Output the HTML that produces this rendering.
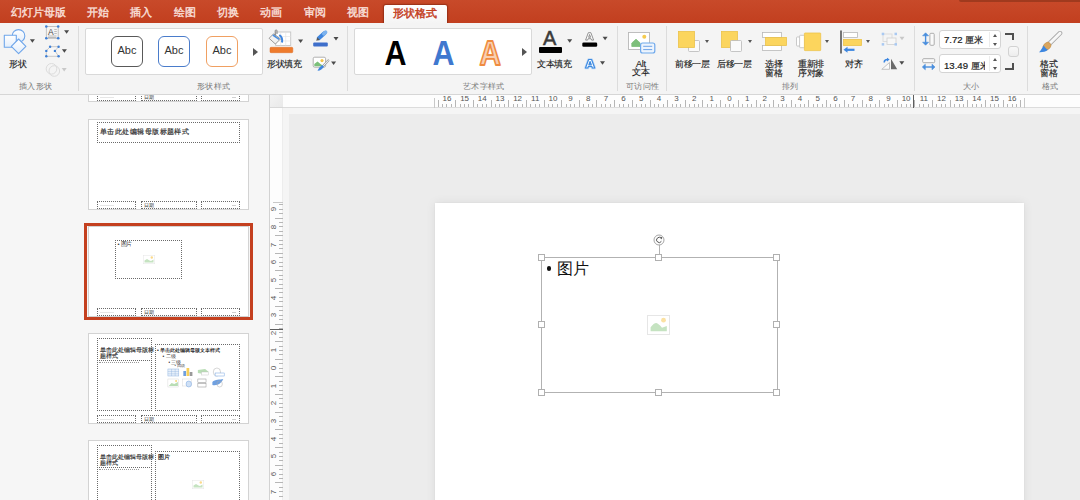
<!DOCTYPE html>
<html><head><meta charset="utf-8">
<style>
*{box-sizing:border-box}
html,body{margin:0;padding:0;width:1080px;height:500px;overflow:hidden;background:#F5F5F5;font-family:"Liberation Sans",sans-serif}
.a{position:absolute}
#tabs{left:0;top:0;width:1080px;height:23px;background:linear-gradient(#C84A2A,#C23F1F)}
.tab{position:absolute;top:6px;font-size:10.6px;line-height:13px;color:#F8DFD7;white-space:nowrap;-webkit-text-stroke:0.4px #F8DFD7}
#ribbon{left:0;top:23px;width:1080px;height:72px;background:#F4F4F4;border-bottom:1px solid #D6D6D6}
.sep{position:absolute;top:3px;width:1px;height:65px;background:#DCDCDC}
.lbl{position:absolute;font-size:9px;line-height:10px;color:#222;white-space:nowrap;letter-spacing:-0.3px;-webkit-text-stroke:0.15px #222}
.glbl{position:absolute;top:58px;font-size:8.4px;letter-spacing:0.3px;line-height:10px;color:#7A7A7A;white-space:nowrap}
.rt{position:absolute;width:1px;background:#B6B6B6}
.rn{position:absolute;top:0px;width:20px;text-align:center;font-size:8px;line-height:8px;color:#555;font-family:"Liberation Sans",sans-serif}
.vn{position:absolute;left:-6px;width:20px;height:20px;text-align:center;font-size:8px;line-height:20px;color:#555;transform:rotate(-90deg)}
.hd{position:absolute;width:7px;height:7px;background:#FFF;border:1px solid #B0B0B0}
.th{position:absolute;width:161px;height:91px;background:#FFF;border:1px solid #D3D3D3;overflow:hidden}
.ph{position:absolute;border:1px dotted #6A6A6A;margin:-1px 0 0 -1px}
.dd{position:absolute;width:0;height:0;border-left:2.5px solid transparent;border-right:2.5px solid transparent;border-top:3.5px solid #555}
</style></head><body>
<div id="tabs" class="a">
  <div class="a" style="left:959px;top:0;width:121px;height:2px;background:#A03A1E;border-radius:0 0 0 3px"></div>
  <span class="tab" style="left:11px">幻灯片母版</span>
  <span class="tab" style="left:87px">开始</span>
  <span class="tab" style="left:130px">插入</span>
  <span class="tab" style="left:174px">绘图</span>
  <span class="tab" style="left:217px">切换</span>
  <span class="tab" style="left:260px">动画</span>
  <span class="tab" style="left:304px">审阅</span>
  <span class="tab" style="left:347px">视图</span>
  <div class="a" style="left:383.5px;top:5px;width:63px;height:19px;background:linear-gradient(#FFFFFF,#F4F4F4);border-radius:2px 2px 0 0;box-shadow:0 0 1.5px 1px rgba(110,30,10,0.55)"></div>
  <span class="tab" style="left:392.5px;top:6.5px;color:#C4401F;-webkit-text-stroke:0.45px #C4401F">形状格式</span>
</div>
<div id="ribbon" class="a">
  <!-- group 1: insert shapes -->
  <svg class="a" style="left:0;top:0" width="78" height="60" viewBox="0 0 78 60">
    <defs><linearGradient id="gb" x1="0" y1="0" x2="0" y2="1"><stop offset="0" stop-color="#FFFFFF"/><stop offset="1" stop-color="#E3EEFB"/></linearGradient></defs>
    <g stroke="#6FA6EA" stroke-width="1.1" stroke-linejoin="round" fill="url(#gb)">
    <circle cx="18.5" cy="12.9" r="6.3"/>
    <rect x="4.3" y="12.3" width="12" height="12"/>
    <path d="M18.6 16 L25.9 23.3 L18.6 30.6 L11.3 23.3 Z"/>
    </g>
    <path d="M29.90 16.25 H34.90 L32.40 19.75 Z" fill="#4A4A4A"/>
    <rect x="46.3" y="3.5" width="11.9" height="11.8" fill="#F4F4F4" stroke="#B5B5B5" stroke-width="0.8"/>
    <text x="48" y="12.3" font-size="8.5" font-family="Liberation Sans" fill="#444">A</text>
    <path d="M54.3 6.5h2.5M54.3 8.5h2.5M54.3 10.5h2.5M48 13h8.5M48 14.5h8.5" stroke="#A5A5A5" stroke-width="0.7"/>
    <g fill="#3D7FD6"><circle cx="46.3" cy="3.5" r="1.3"/><circle cx="58.2" cy="3.5" r="1.3"/><circle cx="46.3" cy="15.3" r="1.3"/><circle cx="58.2" cy="15.3" r="1.3"/></g>
    <path d="M64.10 7.35 H69.10 L66.60 10.85 Z" fill="#4A4A4A"/>
    <path d="M50.1 23.7 H58.6 L54.9 27.9 L58.6 33.3 H46.3 V27.9 Z" fill="#F7F7F7" stroke="#BDBDBD" stroke-width="0.8"/>
    <g fill="#3D7FD6"><circle cx="50.1" cy="23.7" r="1.2"/><circle cx="58.6" cy="23.7" r="1.2"/><circle cx="54.9" cy="27.9" r="1.2"/><circle cx="58.6" cy="33.3" r="1.2"/><circle cx="46.3" cy="33.3" r="1.2"/><circle cx="46.3" cy="27.9" r="1.2"/></g>
    <path d="M61.90 26.15 H66.90 L64.40 29.65 Z" fill="#4A4A4A"/>
    <circle cx="51.5" cy="45.8" r="5.3" fill="none" stroke="#DCDCDC" stroke-width="1"/>
    <circle cx="54.3" cy="48" r="5.3" fill="none" stroke="#DCDCDC" stroke-width="1"/>
    <path d="M61.70 44.95 H66.70 L64.20 48.45 Z" fill="#C9C9C9"/>
  </svg>
  <span class="lbl" style="left:9px;top:36px">形状</span>
  <span class="glbl" style="left:19px">插入形状</span>
  <div class="sep" style="left:78px"></div>

  <!-- group 2: shape styles gallery -->
  <div class="a" style="left:85px;top:5px;width:178px;height:47px;background:#FFF;border:1px solid #D9D9D9;border-radius:2px"></div>
  <div class="a" style="left:111px;top:13px;width:32px;height:31px;border:1.5px solid #595959;border-radius:6px;font-size:11px;line-height:26px;text-align:center;color:#333">Abc</div>
  <div class="a" style="left:158px;top:13px;width:32px;height:31px;border:1.5px solid #4A7CCB;border-radius:6px;font-size:11px;line-height:26px;text-align:center;color:#333">Abc</div>
  <div class="a" style="left:206px;top:13px;width:32px;height:31px;border:1.5px solid #F0A062;border-radius:6px;font-size:11px;line-height:26px;text-align:center;color:#333">Abc</div>
  <div class="a" style="left:253px;top:25px;width:0;height:0;border-top:4px solid transparent;border-bottom:4px solid transparent;border-left:5px solid #555"></div>
  <span class="glbl" style="left:197px">形状样式</span>

  <!-- group 3: fill/outline/effects -->
  <svg class="a" style="left:262px;top:0" width="86" height="60" viewBox="0 0 86 60">
    <rect x="13.7" y="9" width="15" height="13.5" fill="#FFF" stroke="#C4C4C4" stroke-width="0.9"/>
    <path d="M18.7 9v13.5M23.7 9v13.5M13.7 13.5h15M13.7 18h15" stroke="#E2E2E2" stroke-width="0.6"/>
    <path d="M7.1 15.3 L11.6 10.8 L18.5 15.9 L13.4 21 Z" fill="#F2F2F2" stroke="#8E8E8E" stroke-width="0.9" stroke-linejoin="round"/>
    <path d="M10.8 12 L17.2 16.3" stroke="#4A8FE0" stroke-width="1.6"/>
    <path d="M13.2 12.5 V7.8 C13.2 6.6 15 6.6 15 7.8 V11" fill="none" stroke="#777" stroke-width="0.9"/>
    <path d="M17.3 12 Q21 14.5 20 19.5" fill="none" stroke="#3F86DF" stroke-width="2"/>
    <rect x="8" y="24.3" width="22.8" height="5.4" rx="1" fill="#EE7B2C" stroke="#DC6A20" stroke-width="0.5"/>
    <path d="M36.10 16.45 H41.10 L38.60 19.95 Z" fill="#4A4A4A"/>
    <path d="M56.8 15.2 L62.6 10.1" stroke="#3F86DF" stroke-width="4" stroke-linecap="round"/>
    <path d="M61.8 10.8 L63.6 9.2" stroke="#7DB3EE" stroke-width="3.6" stroke-linecap="round"/>
    <path d="M54.2 17.8 L55.3 14.3 L57.8 16.9 Z" fill="#5A5A5A"/>
    <rect x="51.2" y="19.4" width="14.6" height="4.2" rx="1" fill="#3E6FCB"/>
    <path d="M71.50 14.05 H76.50 L74.00 17.55 Z" fill="#4A4A4A"/>
    <rect x="51.2" y="34.2" width="12.4" height="10" rx="1.5" fill="#FFF" stroke="#A8A8A8" stroke-width="0.9"/>
    <path d="M52.3 43.3 V41 L55.5 38.6 L58.5 41 L60 42 V43.3 Z" fill="#7CC07A"/>
    <circle cx="60" cy="37.6" r="1.6" fill="#F3C54A"/>
    <path d="M61.5 42.5 L66.3 37.5" stroke="#A0A0A0" stroke-width="2.2" stroke-linecap="round"/>
    <path d="M61.5 42.5 L66.3 37.5" stroke="#F5F5F5" stroke-width="1" stroke-linecap="round"/>
    <path d="M55.5 47.8 C56.5 45.5 58 43.5 60.3 42 L62 43.7 C60.5 46 58.5 47.5 55.5 47.8Z" fill="#3F86DF"/>
    <path d="M69.10 38.45 H74.10 L71.60 41.95 Z" fill="#4A4A4A"/>
  </svg>
  <span class="lbl" style="left:267px;top:36px">形状填充</span>
  <div class="sep" style="left:347px"></div>

  <!-- group 4: wordart -->
  <div class="a" style="left:354px;top:5px;width:178px;height:47px;background:#FFF;border:1px solid #D9D9D9;border-radius:2px"></div>
  <svg class="a" style="left:380px;top:14px" width="130" height="30" viewBox="0 0 130 30">
    <g transform="translate(4.5,28) scale(0.86,1)"><text x="0" y="0" font-size="35.5" font-weight="bold" font-family="Liberation Sans" fill="#000">A</text></g>
    <g transform="translate(52.5,28) scale(0.86,1)"><text x="0" y="0" font-size="35.5" font-weight="bold" font-family="Liberation Sans" fill="#3F78CF">A</text></g>
    <g transform="translate(99.5,28) scale(0.86,1)"><text x="0" y="0" font-size="34.5" font-weight="bold" font-family="Liberation Sans" fill="#F8D0B2" stroke="#EF8B40" stroke-width="1.8" stroke-linejoin="round">A</text></g>
  </svg>
  <div class="a" style="left:522px;top:25px;width:0;height:0;border-top:4px solid transparent;border-bottom:4px solid transparent;border-left:5px solid #555"></div>
  <span class="glbl" style="left:463px">艺术字样式</span>

  <!-- group 5: text fill -->
  <span class="a" style="left:543px;top:5px;font-size:20px;line-height:20px;color:#3A3A3A;-webkit-text-stroke:0.5px #3A3A3A">A</span>
  <div class="a" style="left:539px;top:24px;width:23px;height:6px;background:#000;border-radius:1px"></div>
  <span class="lbl" style="left:537px;top:36px">文本填充</span>
  <svg class="a" style="left:530px;top:0" width="87" height="60" viewBox="0 0 87 60">
    <path d="M37.20 16.25 H42.20 L39.70 19.75 Z" fill="#4A4A4A"/>
    <path d="M55.60 17.10 L58.32 9.70 L60.88 9.70 L63.60 17.10 L61.60 17.10 L61.08 15.69 L58.12 15.69 L57.60 17.10 Z M58.60 14.29 L60.60 14.29 L59.60 11.48 Z" fill="#FFF" stroke="#7A7A7A" stroke-width="0.8" stroke-linejoin="round" fill-rule="evenodd"/>
    <rect x="52.3" y="19.5" width="14.9" height="4.2" rx="1.3" fill="#000"/>
    <path d="M72.60 13.75 H77.60 L75.10 17.25 Z" fill="#4A4A4A"/>
    <path d="M55.50 45.00 L58.63 36.50 L61.57 36.50 L64.70 45.00 L62.40 45.00 L61.80 43.38 L58.40 43.38 L57.80 45.00 Z M58.95 41.77 L61.25 41.77 L60.10 38.54 Z" fill="#FFF" stroke="#BFD9F6" stroke-width="2.6" stroke-linejoin="round" fill-rule="evenodd"/>
    <path d="M55.50 45.00 L58.63 36.50 L61.57 36.50 L64.70 45.00 L62.40 45.00 L61.80 43.38 L58.40 43.38 L57.80 45.00 Z M58.95 41.77 L61.25 41.77 L60.10 38.54 Z" fill="#FFF" stroke="#3F8BE0" stroke-width="1.2" stroke-linejoin="round" fill-rule="evenodd"/>
    <path d="M70.00 38.25 H75.00 L72.50 41.75 Z" fill="#4A4A4A"/>
  </svg>
  <div class="sep" style="left:617px"></div>

  <!-- group 6: alt text -->
  <svg class="a" style="left:627px;top:8px" width="30" height="23" viewBox="0 0 30 23">
    <rect x="1.5" y="1.5" width="21" height="17" fill="#FFF" stroke="#B8B8B8" stroke-width="0.9"/>
    <path d="M4.8 15.5 V12 L9 8.2 L13 11.8 V15.5 Z" fill="#7DBF7A" stroke="#7DBF7A" stroke-width="0.8" stroke-linejoin="round"/>
    <circle cx="17.3" cy="5.7" r="2" fill="#F5CB4E"/>
    <rect x="13.6" y="12" width="14.2" height="10" rx="2" fill="#EDF4FD" stroke="#6FA9EC" stroke-width="1.2"/>
    <path d="M16.2 15.3h9M16.2 18.6h9" stroke="#6FA4E6" stroke-width="1"/>
  </svg>
  <span class="lbl" style="left:636px;top:36px">Alt</span>
  <span class="lbl" style="left:632px;top:44px">文本</span>
  <span class="glbl" style="left:626px">可访问性</span>
  <div class="sep" style="left:666px"></div>

  <!-- group 7: arrange -->
  <svg class="a" style="left:677px;top:7px" width="24" height="23" viewBox="0 0 24 23">
    <rect x="11.5" y="10.5" width="11" height="11" rx="1" fill="#FAFAFA" stroke="#B8B8B8" stroke-width="0.8"/>
    <rect x="1.5" y="1.5" width="16" height="16" fill="#FBD55E" stroke="#EBC24A" stroke-width="0.8"/>
  </svg>
  <div class="dd" style="left:705px;top:17px"></div>
  <span class="lbl" style="left:675px;top:36px">前移一层</span>
  <svg class="a" style="left:720px;top:7px" width="24" height="23" viewBox="0 0 24 23">
    <rect x="1.5" y="1.5" width="16" height="16" fill="#FBD55E" stroke="#EBC24A" stroke-width="0.8"/>
    <rect x="10.5" y="10.5" width="11" height="11" rx="1" fill="#FAFAFA" stroke="#B8B8B8" stroke-width="0.8"/>
  </svg>
  <div class="dd" style="left:748px;top:17px"></div>
  <span class="lbl" style="left:717px;top:36px">后移一层</span>
  <svg class="a" style="left:761px;top:8px" width="27" height="21" viewBox="0 0 27 21">
    <rect x="1.5" y="1.5" width="19" height="5" fill="#FFF" stroke="#B8B8B8" stroke-width="0.8"/>
    <rect x="1.5" y="14.5" width="19" height="5" fill="#FFF" stroke="#B8B8B8" stroke-width="0.8"/>
    <rect x="4.5" y="6.5" width="21" height="8" fill="#FBD55E" stroke="#EBC24A" stroke-width="0.8"/>
  </svg>
  <span class="lbl" style="left:765px;top:36px">选择</span>
  <span class="lbl" style="left:765px;top:45px">窗格</span>
  <svg class="a" style="left:794px;top:8px" width="28" height="21" viewBox="0 0 28 21">
    <rect x="2.5" y="6" width="4" height="9" rx="0.8" fill="#FFF" stroke="#BDBDBD" stroke-width="0.8"/>
    <rect x="5.6" y="4.3" width="5" height="12.4" rx="0.8" fill="#FFF" stroke="#BDBDBD" stroke-width="0.8"/>
    <rect x="10.4" y="2" width="16.3" height="17.6" rx="0.6" fill="#FCD55D" stroke="#EDC44C" stroke-width="0.8"/>
  </svg>
  <div class="dd" style="left:825px;top:17px"></div>
  <span class="lbl" style="left:798px;top:36px">重新排</span>
  <span class="lbl" style="left:798px;top:45px">序对象</span>
  <svg class="a" style="left:839px;top:7px" width="24" height="25" viewBox="0 0 24 25">
    <path d="M2 0.5 V23.5" stroke="#555" stroke-width="1.6"/>
    <rect x="4.5" y="2.5" width="14" height="5" fill="#FFF" stroke="#B8B8B8" stroke-width="0.8"/>
    <rect x="4.5" y="9.5" width="18" height="6" fill="#FBD55E" stroke="#EBC24A" stroke-width="0.8"/>
    <path d="M15.5 19.8 H7" stroke="#3C86E0" stroke-width="2.2"/>
    <path d="M4.5 19.8 L8.5 16.8 V22.8 Z" fill="#3C86E0"/>
  </svg>
  <div class="dd" style="left:866px;top:16.5px"></div>
  <span class="lbl" style="left:845px;top:36px">对齐</span>
  <svg class="a" style="left:876px;top:0" width="34" height="60" viewBox="0 0 34 60">
    <rect x="7" y="11.0" width="9" height="7.5" fill="none" stroke="#D8D8D8" stroke-width="0.8"/>
    <rect x="11" y="15.0" width="9" height="6.5" fill="#F7F7F7" stroke="#D0D0D0" stroke-width="0.8"/>
    <g fill="#A9C9F2"><rect x="5.7" y="9.7" width="2.5" height="2.5"/><rect x="18.5" y="9.7" width="2.5" height="2.5"/><rect x="5.7" y="20.1" width="2.5" height="2.5"/><rect x="18.5" y="20.1" width="2.5" height="2.5"/></g>
    <path d="M23.50 13.75 H28.50 L26.00 17.25 Z" fill="#C8C8C8"/>
    <path d="M5.8 46.3 L13.5 39.5 V46.3 Z" fill="#FAFAFA" stroke="#B5B5B5" stroke-width="0.8" stroke-linejoin="round"/>
    <path d="M15 35.7 V46.3 H21.2 Z" fill="#6A6A6A"/>
    <path d="M8.2 39.5 C8.2 37.5 9.5 36.6 11.5 36.6" fill="none" stroke="#3C86E0" stroke-width="1.5"/>
    <path d="M11 34.8 L13.6 36.6 L11 38.5 Z" fill="#3C86E0"/>
    <path d="M23.30 38.25 H28.30 L25.80 41.75 Z" fill="#4A4A4A"/>
  </svg>
  <span class="glbl" style="left:782px">排列</span>
  <div class="sep" style="left:914px"></div>

  <!-- group 8: size -->
  <svg class="a" style="left:921px;top:9px" width="14" height="14" viewBox="0 0 14 14">
    <path d="M4.6 3 V11" stroke="#4A8FDD" stroke-width="1.4"/>
    <path d="M4.6 0.8 L7.6 3.8 H1.6Z M4.6 13.2 L7.6 10.2 H1.6Z" fill="#4A8FDD" stroke="#4A8FDD" stroke-width="0.6" stroke-linejoin="round"/>
    <rect x="8.9" y="1.3" width="4.3" height="12" rx="1" fill="#FAFAFA" stroke="#A5A5A5" stroke-width="0.9"/>
  </svg>
  <div class="a" style="left:939px;top:7px;width:62px;height:19px;background:#FFF;border:1px solid #D4D4D4;border-radius:3px"></div>
  <span class="a" style="left:944px;top:11px;font-size:9.6px;line-height:12px;color:#222;white-space:nowrap;-webkit-text-stroke:0.2px #222">7.72 <span style="font-size:8.8px">厘米</span></span>
  <div class="a" style="left:989px;top:9px;width:1px;height:15px;background:#ECECEC"></div>
  <div class="a" style="left:993px;top:11px;width:0;height:0;border-left:2.5px solid transparent;border-right:2.5px solid transparent;border-bottom:3px solid #555"></div>
  <div class="a" style="left:993px;top:20px;width:0;height:0;border-left:2.5px solid transparent;border-right:2.5px solid transparent;border-top:3px solid #555"></div>
  <svg class="a" style="left:921px;top:34px" width="15" height="14" viewBox="0 0 15 14">
    <rect x="1.7" y="1.7" width="12" height="4" rx="1" fill="#FAFAFA" stroke="#A5A5A5" stroke-width="0.9"/>
    <path d="M3.5 10 H11.8" stroke="#4A8FDD" stroke-width="1.4"/>
    <path d="M1.3 10 L4.3 7.2 V12.8Z M14 10 L11 7.2 V12.8Z" fill="#4A8FDD" stroke="#4A8FDD" stroke-width="0.6" stroke-linejoin="round"/>
  </svg>
  <div class="a" style="left:939px;top:31px;width:62px;height:19px;background:#FFF;border:1px solid #D4D4D4;border-radius:3px;overflow:hidden"></div>
  <div class="a" style="left:944px;top:35px;width:41px;height:12px;overflow:hidden;line-height:12px"><span style="font-size:9.6px;line-height:12px;color:#222;white-space:nowrap;-webkit-text-stroke:0.2px #222">13.49 <span style="font-size:8.8px">厘米</span></span></div>
  <div class="a" style="left:989px;top:33px;width:1px;height:15px;background:#ECECEC"></div>
  <div class="a" style="left:993px;top:35px;width:0;height:0;border-left:2.5px solid transparent;border-right:2.5px solid transparent;border-bottom:3px solid #555"></div>
  <div class="a" style="left:993px;top:44px;width:0;height:0;border-left:2.5px solid transparent;border-right:2.5px solid transparent;border-top:3px solid #555"></div>
  <div class="a" style="left:1005px;top:10px;width:9px;height:7px;border-top:2px solid #505050;border-right:2px solid #505050"></div>
  <div class="a" style="left:1005px;top:40px;width:9px;height:7px;border-bottom:2px solid #505050;border-right:2px solid #505050"></div>
  <div class="a" style="left:1007.5px;top:23px;width:11px;height:11px;background:linear-gradient(#F8F8F8,#EDEDED);border:1px solid #D2D2D2;border-radius:3px"></div>
  <span class="glbl" style="left:963px">大小</span>
  <div class="sep" style="left:1027px"></div>

  <!-- group 9: format pane -->
  <svg class="a" style="left:1037px;top:8px" width="26" height="23" viewBox="0 0 26 23">
    <path d="M11 14 L23 2.2" stroke="#A8A8A8" stroke-width="4.6" stroke-linecap="round"/>
    <path d="M11 14 L23 2.2" stroke="#F7F7F7" stroke-width="3" stroke-linecap="round"/>
    <ellipse cx="10" cy="15.2" rx="4.3" ry="3.4" transform="rotate(-45 10 15.2)" fill="#D9A55E" stroke="#C08A45" stroke-width="0.5"/>
    <path d="M6.6 14.5 C8 16.5 9 17.8 11 18.8 C8.5 21 5.5 21.3 2 21.2 C3.8 20 5 17 6.6 14.5Z" fill="#3C86E0"/>
  </svg>
  <span class="lbl" style="left:1040px;top:36px">格式</span>
  <span class="lbl" style="left:1040px;top:45px">窗格</span>
  <span class="glbl" style="left:1042px">格式</span>
</div>

<!-- left panel -->
<div class="a" id="panel" style="left:0;top:95px;width:269px;height:405px;background:#F6F6F6;overflow:hidden">
<!-- thumbnails -->
<div class="th" style="left:88px;top:-84px"><div class="ph" style="left:9px;top:82px;width:39px;height:8px"><div class="a" style="left:2px;top:3px;width:14px;height:1px;background:#E6E6E6"></div></div><div class="ph" style="left:53px;top:82px;width:56px;height:8px"><span class="a" style="left:2px;top:0px;font-size:5px;line-height:6px;color:#333">日期</span></div><div class="ph" style="left:113px;top:82px;width:39px;height:8px"><div class="a" style="left:30px;top:3px;width:4px;height:1px;background:#D0D0D0"></div></div></div>
<div class="th" style="left:88px;top:24px"><div class="ph" style="left:9px;top:3px;width:143px;height:21px"><span class="a" style="left:2px;top:4px;font-size:7px;letter-spacing:0.45px;line-height:10px;color:#333;white-space:nowrap;-webkit-text-stroke:0.2px #333">单击此处编辑母版标题样式</span></div><div class="ph" style="left:9px;top:82px;width:39px;height:8px"><div class="a" style="left:2px;top:3px;width:14px;height:1px;background:#E6E6E6"></div></div><div class="ph" style="left:53px;top:82px;width:56px;height:8px"><span class="a" style="left:2px;top:0px;font-size:5px;line-height:6px;color:#333">日期</span></div><div class="ph" style="left:113px;top:82px;width:39px;height:8px"><div class="a" style="left:30px;top:3px;width:4px;height:1px;background:#D0D0D0"></div></div></div>
<div class="a" style="left:84px;top:128px;width:169px;height:97px;border:3px solid #C4401F"></div><div class="th" style="left:88px;top:131px"><div class="ph" style="left:27px;top:14px;width:67px;height:39px"><span class="a" style="left:1.5px;top:-0.5px;font-size:5.8px;line-height:7px;color:#333;white-space:nowrap;letter-spacing:-0.3px">• 图片</span><svg class="a" style="left:27px;top:14px" width="12" height="9" viewBox="0 0 12 9"><rect x="0.25" y="0.25" width="11.5" height="8.5" fill="#FFF" stroke="#E5E5E5" stroke-width="0.5"/><path d="M1.5 7.5 V5.5 L4 4 L6.5 5.5 L8 6 L10.5 4.5 V7.5Z" fill="#C5E3C1"/><circle cx="8.8" cy="2.5" r="1.2" fill="#FBD98A"/></svg></div><div class="ph" style="left:9px;top:82px;width:39px;height:8px"><div class="a" style="left:2px;top:3px;width:14px;height:1px;background:#E6E6E6"></div></div><div class="ph" style="left:53px;top:82px;width:56px;height:8px"><span class="a" style="left:2px;top:0px;font-size:5px;line-height:6px;color:#333">日期</span></div><div class="ph" style="left:113px;top:82px;width:39px;height:8px"><div class="a" style="left:30px;top:3px;width:4px;height:1px;background:#D0D0D0"></div></div></div>
<div class="th" style="left:88px;top:238px"><div class="ph" style="left:9px;top:5px;width:55px;height:23px"><span class="a" style="left:2px;top:8px;width:55px;font-size:5.5px;line-height:6px;color:#333;word-break:break-all;-webkit-text-stroke:0.15px #333">单击此处编辑母版标题样式</span></div><div class="ph" style="left:9px;top:27px;width:55px;height:51px"><div class="a" style="left:1px;top:1px;width:40px;height:2px;border-top:1px dotted #999"></div></div><div class="ph" style="left:67px;top:11px;width:85px;height:67px"><span class="a" style="left:1px;top:1.5px;font-size:5px;line-height:6px;color:#222;white-space:nowrap;-webkit-text-stroke:0.15px #222">• 单击此处编辑母版文本样式</span><span class="a" style="left:6.5px;top:8.5px;font-size:5px;line-height:5px;color:#333;white-space:nowrap">• 二级</span><span class="a" style="left:12.5px;top:14.5px;font-size:4.5px;line-height:5px;color:#333;white-space:nowrap">• 三级</span><span class="a" style="left:18.5px;top:19px;font-size:4px;line-height:4px;color:#555;white-space:nowrap">• 四级</span><svg class="a" style="left:10.5px;top:22px" width="59" height="22" viewBox="0 0 65 22" preserveAspectRatio="none"><rect x="1" y="2" width="12" height="7" fill="#E8F0FA" stroke="#8FB3E0" stroke-width="0.5"/><path d="M1 4.5h12M1 6.8h12M5 2v7M9 2v7" stroke="#8FB3E0" stroke-width="0.4"/><rect x="18" y="4" width="3" height="5" fill="#6FA0E0"/><rect x="21.5" y="1" width="3" height="8" fill="#F6CF5A"/><rect x="25" y="5" width="3" height="4" fill="#9A9A9A"/><path d="M34 3 L42 2 L46 5 L40 7 L34 6Z" fill="#B9DDB5"/><rect x="38" y="5" width="8" height="3" fill="#FFF" stroke="#BBB" stroke-width="0.4"/><circle cx="55" cy="5" r="4" fill="none" stroke="#AAA" stroke-width="0.5"/><rect x="53" y="6" width="10" height="3" fill="#FFF" stroke="#6FA0E0" stroke-width="0.5"/><rect x="1" y="12" width="12" height="8" fill="#FFF" stroke="#CCC" stroke-width="0.4"/><path d="M2 19 L5 16 L8 17 L12 15 V19Z" fill="#B9DDB5"/><circle cx="10" cy="14" r="0.9" fill="#F6CF5A"/><rect x="17" y="12" width="10" height="7" fill="#FFF" stroke="#CCC" stroke-width="0.4"/><circle cx="24" cy="17" r="3" fill="#CFE0F5" stroke="#6FA0E0" stroke-width="0.5"/><rect x="34" y="12" width="9" height="3.5" fill="#FFF" stroke="#888" stroke-width="0.5"/><rect x="34" y="16.5" width="9" height="3.5" fill="#FFF" stroke="#888" stroke-width="0.5"/><path d="M50 15 C53 12 58 13 62 12 C60 16 56 19 50 18Z" fill="#6FA0E0"/><circle cx="58" cy="17" r="3" fill="none" stroke="#AAA" stroke-width="0.5"/></svg></div><div class="ph" style="left:9px;top:82px;width:39px;height:8px"><div class="a" style="left:2px;top:3px;width:14px;height:1px;background:#E6E6E6"></div></div><div class="ph" style="left:53px;top:82px;width:56px;height:8px"><span class="a" style="left:2px;top:0px;font-size:5px;line-height:6px;color:#333">日期</span></div><div class="ph" style="left:113px;top:82px;width:39px;height:8px"><div class="a" style="left:30px;top:3px;width:4px;height:1px;background:#D0D0D0"></div></div></div>
<div class="th" style="left:88px;top:345px"><div class="ph" style="left:9px;top:5px;width:55px;height:23px"><span class="a" style="left:2px;top:8px;width:55px;font-size:5.5px;line-height:6px;color:#333;word-break:break-all;-webkit-text-stroke:0.15px #333">单击此处编辑母版标题样式</span></div><div class="ph" style="left:9px;top:27px;width:55px;height:51px"><div class="a" style="left:1px;top:1px;width:40px;height:2px;border-top:1px dotted #999"></div></div><div class="ph" style="left:67px;top:11px;width:85px;height:67px"><span class="a" style="left:1.5px;top:1.5px;font-size:6px;line-height:7px;color:#222;white-space:nowrap;-webkit-text-stroke:0.2px #222">图片</span><svg class="a" style="left:36px;top:28px" width="12" height="9" viewBox="0 0 12 9"><rect x="0.25" y="0.25" width="11.5" height="8.5" fill="#FFF" stroke="#E5E5E5" stroke-width="0.5"/><path d="M1.5 7.5 V5.5 L4 4 L6.5 5.5 L8 6 L10.5 4.5 V7.5Z" fill="#C5E3C1"/><circle cx="8.8" cy="2.5" r="1.2" fill="#FBD98A"/></svg></div><div class="ph" style="left:9px;top:82px;width:39px;height:8px"><div class="a" style="left:2px;top:3px;width:14px;height:1px;background:#E6E6E6"></div></div><div class="ph" style="left:53px;top:82px;width:56px;height:8px"><span class="a" style="left:2px;top:0px;font-size:5px;line-height:6px;color:#333">日期</span></div><div class="ph" style="left:113px;top:82px;width:39px;height:8px"><div class="a" style="left:30px;top:3px;width:4px;height:1px;background:#D0D0D0"></div></div></div>
</div>
<div class="a" style="left:269px;top:95px;width:1px;height:405px;background:#D2D2D2"></div>
<!-- ruler corner -->
<div class="a" style="left:270px;top:95px;width:13px;height:13px;background:linear-gradient(135deg,#F3F3F3,#E9E9E9);border-bottom:1px solid #D8D8D8"></div>
<!-- horizontal ruler -->
<div class="a" id="hr" style="left:283px;top:95px;width:797px;height:13px;background:#FDFDFD;border-bottom:1px solid #DCDCDC"></div>
<div class="a" style="left:0;top:95px;width:1080px;height:13px"><div class="rt" style="left:438px;top:5px;height:7px"></div><div class="rt" style="left:442px;top:9px;height:3px"></div><span class="rn" style="left:436.9px">16</span><div class="rt" style="left:446px;top:9px;height:3px"></div><div class="rt" style="left:451px;top:9px;height:3px"></div><div class="rt" style="left:455px;top:5px;height:7px"></div><div class="rt" style="left:460px;top:9px;height:3px"></div><span class="rn" style="left:454.6px">15</span><div class="rt" style="left:464px;top:9px;height:3px"></div><div class="rt" style="left:468px;top:9px;height:3px"></div><div class="rt" style="left:473px;top:5px;height:7px"></div><div class="rt" style="left:477px;top:9px;height:3px"></div><span class="rn" style="left:472.3px">14</span><div class="rt" style="left:482px;top:9px;height:3px"></div><div class="rt" style="left:486px;top:9px;height:3px"></div><div class="rt" style="left:491px;top:5px;height:7px"></div><div class="rt" style="left:495px;top:9px;height:3px"></div><span class="rn" style="left:489.9px">13</span><div class="rt" style="left:499px;top:9px;height:3px"></div><div class="rt" style="left:504px;top:9px;height:3px"></div><div class="rt" style="left:508px;top:5px;height:7px"></div><div class="rt" style="left:513px;top:9px;height:3px"></div><span class="rn" style="left:507.6px">12</span><div class="rt" style="left:517px;top:9px;height:3px"></div><div class="rt" style="left:522px;top:9px;height:3px"></div><div class="rt" style="left:526px;top:5px;height:7px"></div><div class="rt" style="left:530px;top:9px;height:3px"></div><span class="rn" style="left:525.2px">11</span><div class="rt" style="left:535px;top:9px;height:3px"></div><div class="rt" style="left:539px;top:9px;height:3px"></div><div class="rt" style="left:544px;top:5px;height:7px"></div><div class="rt" style="left:548px;top:9px;height:3px"></div><span class="rn" style="left:542.9px">10</span><div class="rt" style="left:552px;top:9px;height:3px"></div><div class="rt" style="left:557px;top:9px;height:3px"></div><div class="rt" style="left:561px;top:5px;height:7px"></div><div class="rt" style="left:566px;top:9px;height:3px"></div><span class="rn" style="left:560.6px">9</span><div class="rt" style="left:570px;top:9px;height:3px"></div><div class="rt" style="left:574px;top:9px;height:3px"></div><div class="rt" style="left:579px;top:5px;height:7px"></div><div class="rt" style="left:583px;top:9px;height:3px"></div><span class="rn" style="left:578.2px">8</span><div class="rt" style="left:588px;top:9px;height:3px"></div><div class="rt" style="left:592px;top:9px;height:3px"></div><div class="rt" style="left:596px;top:5px;height:7px"></div><div class="rt" style="left:601px;top:9px;height:3px"></div><span class="rn" style="left:595.9px">7</span><div class="rt" style="left:605px;top:9px;height:3px"></div><div class="rt" style="left:610px;top:9px;height:3px"></div><div class="rt" style="left:614px;top:5px;height:7px"></div><div class="rt" style="left:619px;top:9px;height:3px"></div><span class="rn" style="left:613.5px">6</span><div class="rt" style="left:623px;top:9px;height:3px"></div><div class="rt" style="left:628px;top:9px;height:3px"></div><div class="rt" style="left:632px;top:5px;height:7px"></div><div class="rt" style="left:636px;top:9px;height:3px"></div><span class="rn" style="left:631.2px">5</span><div class="rt" style="left:641px;top:9px;height:3px"></div><div class="rt" style="left:645px;top:9px;height:3px"></div><div class="rt" style="left:650px;top:5px;height:7px"></div><div class="rt" style="left:654px;top:9px;height:3px"></div><span class="rn" style="left:648.9px">4</span><div class="rt" style="left:658px;top:9px;height:3px"></div><div class="rt" style="left:663px;top:9px;height:3px"></div><div class="rt" style="left:667px;top:5px;height:7px"></div><div class="rt" style="left:672px;top:9px;height:3px"></div><span class="rn" style="left:666.5px">3</span><div class="rt" style="left:676px;top:9px;height:3px"></div><div class="rt" style="left:680px;top:9px;height:3px"></div><div class="rt" style="left:685px;top:5px;height:7px"></div><div class="rt" style="left:689px;top:9px;height:3px"></div><span class="rn" style="left:684.2px">2</span><div class="rt" style="left:694px;top:9px;height:3px"></div><div class="rt" style="left:698px;top:9px;height:3px"></div><div class="rt" style="left:702px;top:5px;height:7px"></div><div class="rt" style="left:707px;top:9px;height:3px"></div><span class="rn" style="left:701.8px">1</span><div class="rt" style="left:711px;top:9px;height:3px"></div><div class="rt" style="left:716px;top:9px;height:3px"></div><div class="rt" style="left:720px;top:5px;height:7px"></div><div class="rt" style="left:725px;top:9px;height:3px"></div><span class="rn" style="left:719.5px">0</span><div class="rt" style="left:729px;top:9px;height:3px"></div><div class="rt" style="left:733px;top:9px;height:3px"></div><div class="rt" style="left:738px;top:5px;height:7px"></div><div class="rt" style="left:742px;top:9px;height:3px"></div><span class="rn" style="left:737.2px">1</span><div class="rt" style="left:747px;top:9px;height:3px"></div><div class="rt" style="left:751px;top:9px;height:3px"></div><div class="rt" style="left:756px;top:5px;height:7px"></div><div class="rt" style="left:760px;top:9px;height:3px"></div><span class="rn" style="left:754.8px">2</span><div class="rt" style="left:764px;top:9px;height:3px"></div><div class="rt" style="left:769px;top:9px;height:3px"></div><div class="rt" style="left:773px;top:5px;height:7px"></div><div class="rt" style="left:778px;top:9px;height:3px"></div><span class="rn" style="left:772.5px">3</span><div class="rt" style="left:782px;top:9px;height:3px"></div><div class="rt" style="left:786px;top:9px;height:3px"></div><div class="rt" style="left:791px;top:5px;height:7px"></div><div class="rt" style="left:795px;top:9px;height:3px"></div><span class="rn" style="left:790.1px">4</span><div class="rt" style="left:800px;top:9px;height:3px"></div><div class="rt" style="left:804px;top:9px;height:3px"></div><div class="rt" style="left:808px;top:5px;height:7px"></div><div class="rt" style="left:813px;top:9px;height:3px"></div><span class="rn" style="left:807.8px">5</span><div class="rt" style="left:817px;top:9px;height:3px"></div><div class="rt" style="left:822px;top:9px;height:3px"></div><div class="rt" style="left:826px;top:5px;height:7px"></div><div class="rt" style="left:830px;top:9px;height:3px"></div><span class="rn" style="left:825.5px">6</span><div class="rt" style="left:835px;top:9px;height:3px"></div><div class="rt" style="left:839px;top:9px;height:3px"></div><div class="rt" style="left:844px;top:5px;height:7px"></div><div class="rt" style="left:848px;top:9px;height:3px"></div><span class="rn" style="left:843.1px">7</span><div class="rt" style="left:853px;top:9px;height:3px"></div><div class="rt" style="left:857px;top:9px;height:3px"></div><div class="rt" style="left:862px;top:5px;height:7px"></div><div class="rt" style="left:866px;top:9px;height:3px"></div><span class="rn" style="left:860.8px">8</span><div class="rt" style="left:870px;top:9px;height:3px"></div><div class="rt" style="left:875px;top:9px;height:3px"></div><div class="rt" style="left:879px;top:5px;height:7px"></div><div class="rt" style="left:884px;top:9px;height:3px"></div><span class="rn" style="left:878.4px">9</span><div class="rt" style="left:888px;top:9px;height:3px"></div><div class="rt" style="left:892px;top:9px;height:3px"></div><div class="rt" style="left:897px;top:5px;height:7px"></div><div class="rt" style="left:901px;top:9px;height:3px"></div><span class="rn" style="left:896.1px">10</span><div class="rt" style="left:906px;top:9px;height:3px"></div><div class="rt" style="left:910px;top:9px;height:3px"></div><div class="rt" style="left:914px;top:5px;height:7px"></div><div class="rt" style="left:919px;top:9px;height:3px"></div><span class="rn" style="left:913.8px">11</span><div class="rt" style="left:923px;top:9px;height:3px"></div><div class="rt" style="left:928px;top:9px;height:3px"></div><div class="rt" style="left:932px;top:5px;height:7px"></div><div class="rt" style="left:936px;top:9px;height:3px"></div><span class="rn" style="left:931.4px">12</span><div class="rt" style="left:941px;top:9px;height:3px"></div><div class="rt" style="left:945px;top:9px;height:3px"></div><div class="rt" style="left:950px;top:5px;height:7px"></div><div class="rt" style="left:954px;top:9px;height:3px"></div><span class="rn" style="left:949.1px">13</span><div class="rt" style="left:959px;top:9px;height:3px"></div><div class="rt" style="left:963px;top:9px;height:3px"></div><div class="rt" style="left:967px;top:5px;height:7px"></div><div class="rt" style="left:972px;top:9px;height:3px"></div><span class="rn" style="left:966.7px">14</span><div class="rt" style="left:976px;top:9px;height:3px"></div><div class="rt" style="left:981px;top:9px;height:3px"></div><div class="rt" style="left:985px;top:5px;height:7px"></div><div class="rt" style="left:990px;top:9px;height:3px"></div><span class="rn" style="left:984.4px">15</span><div class="rt" style="left:994px;top:9px;height:3px"></div><div class="rt" style="left:998px;top:9px;height:3px"></div><div class="rt" style="left:1003px;top:5px;height:7px"></div><div class="rt" style="left:1007px;top:9px;height:3px"></div><span class="rn" style="left:1002.1px">16</span><div class="rt" style="left:1012px;top:9px;height:3px"></div><div class="rt" style="left:1016px;top:9px;height:3px"></div><div class="rt" style="left:1020px;top:5px;height:7px"></div>
  <div class="rt" style="left:434px;top:3px;height:12px;background:#C8C8C8"></div>
  <div class="rt" style="left:1024px;top:3px;height:12px;background:#C8C8C8"></div>
  <div class="a" style="left:913px;top:0px;width:1px;height:13px;background:#5E5E5E"></div>
</div>
<!-- vertical ruler -->
<div class="a" style="left:270px;top:108px;width:13px;height:392px;background:#FDFDFD;border-right:1px solid #EDEDED"></div>
<div class="a" style="left:270px;top:0;width:13px;height:500px"><div class="rt" style="top:496px;left:9px;width:4px;height:1px"></div><span class="vn" style="top:481.7px">7</span><div class="rt" style="top:491px;left:9px;width:4px;height:1px"></div><div class="rt" style="top:487px;left:9px;width:4px;height:1px"></div><div class="rt" style="top:482px;left:5px;width:8px;height:1px"></div><div class="rt" style="top:478px;left:9px;width:4px;height:1px"></div><span class="vn" style="top:464.1px">6</span><div class="rt" style="top:474px;left:9px;width:4px;height:1px"></div><div class="rt" style="top:469px;left:9px;width:4px;height:1px"></div><div class="rt" style="top:465px;left:5px;width:8px;height:1px"></div><div class="rt" style="top:460px;left:9px;width:4px;height:1px"></div><span class="vn" style="top:446.4px">5</span><div class="rt" style="top:456px;left:9px;width:4px;height:1px"></div><div class="rt" style="top:452px;left:9px;width:4px;height:1px"></div><div class="rt" style="top:447px;left:5px;width:8px;height:1px"></div><div class="rt" style="top:443px;left:9px;width:4px;height:1px"></div><span class="vn" style="top:428.7px">4</span><div class="rt" style="top:438px;left:9px;width:4px;height:1px"></div><div class="rt" style="top:434px;left:9px;width:4px;height:1px"></div><div class="rt" style="top:429px;left:5px;width:8px;height:1px"></div><div class="rt" style="top:425px;left:9px;width:4px;height:1px"></div><span class="vn" style="top:411.1px">3</span><div class="rt" style="top:421px;left:9px;width:4px;height:1px"></div><div class="rt" style="top:416px;left:9px;width:4px;height:1px"></div><div class="rt" style="top:412px;left:5px;width:8px;height:1px"></div><div class="rt" style="top:407px;left:9px;width:4px;height:1px"></div><span class="vn" style="top:393.4px">2</span><div class="rt" style="top:403px;left:9px;width:4px;height:1px"></div><div class="rt" style="top:398px;left:9px;width:4px;height:1px"></div><div class="rt" style="top:394px;left:5px;width:8px;height:1px"></div><div class="rt" style="top:390px;left:9px;width:4px;height:1px"></div><span class="vn" style="top:375.8px">1</span><div class="rt" style="top:385px;left:9px;width:4px;height:1px"></div><div class="rt" style="top:381px;left:9px;width:4px;height:1px"></div><div class="rt" style="top:376px;left:5px;width:8px;height:1px"></div><div class="rt" style="top:372px;left:9px;width:4px;height:1px"></div><span class="vn" style="top:358.1px">0</span><div class="rt" style="top:368px;left:9px;width:4px;height:1px"></div><div class="rt" style="top:363px;left:9px;width:4px;height:1px"></div><div class="rt" style="top:359px;left:5px;width:8px;height:1px"></div><div class="rt" style="top:354px;left:9px;width:4px;height:1px"></div><span class="vn" style="top:340.4px">1</span><div class="rt" style="top:350px;left:9px;width:4px;height:1px"></div><div class="rt" style="top:346px;left:9px;width:4px;height:1px"></div><div class="rt" style="top:341px;left:5px;width:8px;height:1px"></div><div class="rt" style="top:337px;left:9px;width:4px;height:1px"></div><span class="vn" style="top:322.8px">2</span><div class="rt" style="top:332px;left:9px;width:4px;height:1px"></div><div class="rt" style="top:328px;left:9px;width:4px;height:1px"></div><div class="rt" style="top:324px;left:5px;width:8px;height:1px"></div><div class="rt" style="top:319px;left:9px;width:4px;height:1px"></div><span class="vn" style="top:305.1px">3</span><div class="rt" style="top:315px;left:9px;width:4px;height:1px"></div><div class="rt" style="top:310px;left:9px;width:4px;height:1px"></div><div class="rt" style="top:306px;left:5px;width:8px;height:1px"></div><div class="rt" style="top:301px;left:9px;width:4px;height:1px"></div><span class="vn" style="top:287.5px">4</span><div class="rt" style="top:297px;left:9px;width:4px;height:1px"></div><div class="rt" style="top:292px;left:9px;width:4px;height:1px"></div><div class="rt" style="top:288px;left:5px;width:8px;height:1px"></div><div class="rt" style="top:284px;left:9px;width:4px;height:1px"></div><span class="vn" style="top:269.8px">5</span><div class="rt" style="top:279px;left:9px;width:4px;height:1px"></div><div class="rt" style="top:275px;left:9px;width:4px;height:1px"></div><div class="rt" style="top:270px;left:5px;width:8px;height:1px"></div><div class="rt" style="top:266px;left:9px;width:4px;height:1px"></div><span class="vn" style="top:252.1px">6</span><div class="rt" style="top:262px;left:9px;width:4px;height:1px"></div><div class="rt" style="top:257px;left:9px;width:4px;height:1px"></div><div class="rt" style="top:253px;left:5px;width:8px;height:1px"></div><div class="rt" style="top:248px;left:9px;width:4px;height:1px"></div><span class="vn" style="top:234.5px">7</span><div class="rt" style="top:244px;left:9px;width:4px;height:1px"></div><div class="rt" style="top:240px;left:9px;width:4px;height:1px"></div><div class="rt" style="top:235px;left:5px;width:8px;height:1px"></div><div class="rt" style="top:231px;left:9px;width:4px;height:1px"></div><span class="vn" style="top:216.8px">8</span><div class="rt" style="top:226px;left:9px;width:4px;height:1px"></div><div class="rt" style="top:222px;left:9px;width:4px;height:1px"></div><div class="rt" style="top:218px;left:5px;width:8px;height:1px"></div><div class="rt" style="top:213px;left:9px;width:4px;height:1px"></div><span class="vn" style="top:199.2px">9</span><div class="rt" style="top:209px;left:9px;width:4px;height:1px"></div><div class="rt" style="top:204px;left:9px;width:4px;height:1px"></div>
  <div class="rt" style="top:202px;left:3px;width:12px;height:1px;background:#C8C8C8"></div>
  <div class="a" style="top:329px;left:0px;width:13px;height:1px;background:#5E5E5E"></div>
</div>
<!-- canvas -->
<div class="a" style="left:283px;top:108px;width:797px;height:392px;background:#F5F5F5"></div>
<div class="a" style="left:289px;top:114px;width:791px;height:386px;background:#ECECEC"></div>
<div class="a" style="left:435px;top:203px;width:589px;height:340px;background:#FFF;box-shadow:0 0 10px rgba(0,0,0,0.075),0 0 2px rgba(0,0,0,0.05)"></div>

<!-- selection box on slide -->
<div class="a" style="left:541px;top:257px;width:237px;height:136px;border:1px solid #B2B2B2"></div>
<div class="a" style="left:659px;top:245px;width:1px;height:10px;background:#B2B2B2"></div>
<svg class="a" style="left:653px;top:234px" width="12" height="12" viewBox="0 0 12 12">
  <circle cx="6" cy="6" r="5" fill="#FFF" stroke="#A5A5A5" stroke-width="1"/>
  <path d="M8.2 4.3 A2.6 2.6 0 1 0 8.4 7.3" fill="none" stroke="#555" stroke-width="1"/>
  <path d="M7 2.8 L9.3 3.2 L8.8 5.5 Z" fill="#555"/>
</svg>
<div class="hd" style="left:538px;top:254px"></div>
<div class="hd" style="left:655px;top:254px"></div>
<div class="hd" style="left:773px;top:254px"></div>
<div class="hd" style="left:538px;top:321px"></div>
<div class="hd" style="left:773px;top:321px"></div>
<div class="hd" style="left:538px;top:389px"></div>
<div class="hd" style="left:655px;top:389px"></div>
<div class="hd" style="left:773px;top:389px"></div>
<div class="a" style="left:546.5px;top:266.3px;width:4.3px;height:4.3px;border-radius:50%;background:#111"></div>
<span class="a" style="left:557px;top:259px;font-size:16px;line-height:20px;color:#111">图片</span>
<svg class="a" style="left:647px;top:315px" width="23" height="20" viewBox="0 0 23 20">
  <rect x="0.5" y="0.5" width="22" height="19" fill="#FFF" stroke="#E6E6E6" stroke-width="1"/>
  <path d="M3.6 16.3 V12.3 Q6.8 8 9.3 8 Q11.5 8.5 15 12.7 L19.8 10.9 V16.3 Z" fill="#C5E3C1"/>
  <circle cx="16.5" cy="5.2" r="2.4" fill="#FBE1A2"/>
</svg>
</body></html>
